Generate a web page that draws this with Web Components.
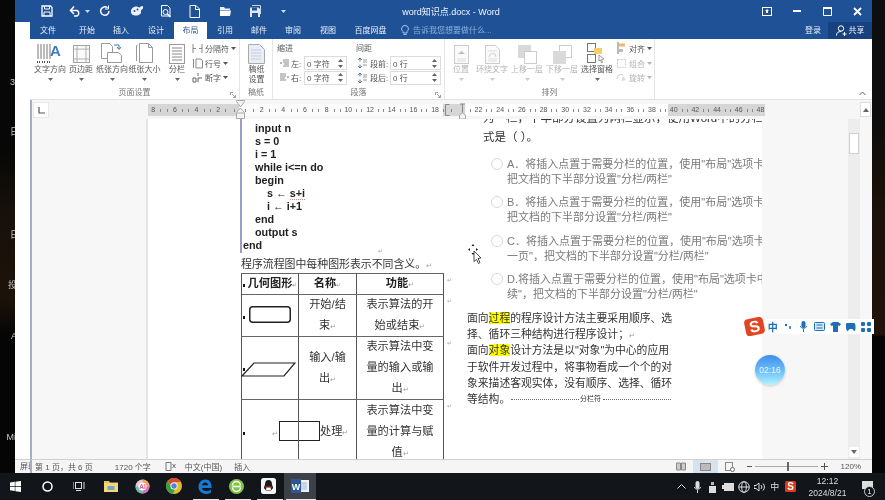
<!DOCTYPE html>
<html lang="zh">
<head>
<meta charset="utf-8">
<title>word知识点.docx - Word</title>
<style>
  html, body { margin: 0; background: #060606; }
  body {
    width: 885px; height: 500px; overflow: hidden; position: relative;
    font-family: "Liberation Sans", "Noto Sans CJK SC", sans-serif;
    filter: blur(.35px);
  }
  .top { display: flex; height: 473px; }
</style>
</head>
<body>
<div class="top">
  <desk-strip></desk-strip>
  <back-strip></back-strip>
  <word-window>
    <title-bar></title-bar>
    <ribbon-tabs></ribbon-tabs>
    <word-ribbon></word-ribbon>
    <word-ruler></word-ruler>
    <doc-view></doc-view>
    <status-bar></status-bar>
  </word-window>
  <desk-edge></desk-edge>
</div>
<task-bar></task-bar>
<float-layer></float-layer>

<script>
const ICONS = {
  textdir: `<svg width="28" height="21" viewBox="0 0 28 21"><g stroke="#777" fill="none"><path d="M2 1v15M5 1v15M8 1v15M11 1v15M14 1v15"/><path d="M1 19h3M6 19h3M11 19h3" stroke="#555" stroke-width="2" stroke-dasharray="1 1"/></g><text x="14" y="13" font-size="15" font-weight="bold" fill="#3d7cc0" font-family="Liberation Sans">A</text></svg>`,
  margins: `<svg width="17" height="19" viewBox="0 0 19 21"><g stroke="#999" fill="#fafafa"><rect x=".5" y=".5" width="18" height="19"/></g><path d="M4.500 1v18M14.500 1v18M1 4.500h17M1 15.500h17" stroke="#aaa" fill="none"/></svg>`,
  orient: `<svg width="24" height="22" viewBox="0 0 24 22"><g stroke="#999" fill="#fff"><path d="M1.500 1.500h8l3 3v12h-11z"/><path d="M7.500 10.500h11l3 3v7h-14z"/></g><path d="M14 3h5v4M17 5l2 2.500 2-2.500" stroke="#3d7cc0" fill="none"/></svg>`,
  size: `<svg width="20" height="22" viewBox="0 0 20 22"><path d="M1.500 19V3.500h1M4.500 1.500h9l4 4v15h-13z" stroke="#999" fill="#fff"/><path d="M13.500 1.500v4h4" stroke="#999" fill="none"/></svg>`,
  cols: `<svg width="16" height="20" viewBox="0 0 16 20"><rect x=".5" y=".5" width="15" height="19" fill="#fff" stroke="#999"/><path d="M3 4h10M3 7h10M3 10h10M3 13h10M3 16h10" stroke="#888"/></svg>`,
  manuscript: `<svg width="17" height="20" viewBox="0 0 17 20"><path d="M.5.5h11l5 5v14H.5z" fill="#e9eef6" stroke="#aaa"/><path d="M3 6h10M3 9h10M3 12h10M3 15h10" stroke="#c4cee0"/></svg>`,
  breaks: `<svg width="11" height="11" viewBox="0 0 11 11"><path d="M1 1v9M10 1v9M1 5.500h3M7 5.500h3" stroke="#888" fill="none"/></svg>`,
  lines: `<svg width="11" height="11" viewBox="0 0 11 11"><path d="M1.500 1v9M4 1h5l1.500 2v7H4z" stroke="#888" fill="#fff"/></svg>`,
  hyphen: `<svg width="11" height="11" viewBox="0 0 11 11"><path d="M1 10V6h3v4zM6 10V6h4" stroke="#666" fill="none"/><path d="M6 1v3" stroke="#3d7cc0"/></svg>`,
  indentL: `<svg width="9" height="9" viewBox="0 0 9 9"><path d="M3 1h6M3 3h6M4 5h5M3 7h6" stroke="#8a8a8a"/><path d="M0 4h2" stroke="#3d7cc0"/></svg>`,
  indentR: `<svg width="9" height="9" viewBox="0 0 9 9"><path d="M0 1h6M0 3h6M0 5h5M0 7h6" stroke="#8a8a8a"/><path d="M7 4h2" stroke="#3d7cc0"/></svg>`,
  spaceB: `<svg width="9" height="10" viewBox="0 0 9 10"><path d="M2 0v3.500M2 6.500v3.500" stroke="#3d7cc0"/><path d="M0 2l2-2 2 2M0 8l2 2 2-2" fill="none" stroke="#555" stroke-width=".7"/><path d="M5 2h4M5 4h4M5 7h4" stroke="#999"/></svg>`,
  position: `<svg width="15" height="19" viewBox="0 0 15 19"><rect x=".5" y=".5" width="14" height="18" fill="#fafafa" stroke="#ccc"/><path d="M3 14h9M3 16h9" stroke="#ddd"/><path d="M4 9l3.500-3 3.500 3z" fill="#bbb"/></svg>`,
  wrap: `<svg width="15" height="19" viewBox="0 0 15 19"><path d="M.5.500h10l4 4v14H.5z" fill="#fafafa" stroke="#ccc"/><path d="M3 6h9M3 14h9M3 16h9" stroke="#ddd"/><path d="M4 12a3.500 3.500 0 0 1 7 0" stroke="#ccc" fill="none"/></svg>`,
  fwd: `<svg width="19" height="19" viewBox="0 0 19 19"><rect x=".5" y=".5" width="12" height="12" fill="#d9d9d9" stroke="#d9d9d9"/><rect x="6.500" y="6.500" width="12" height="12" fill="#fff" stroke="#ccc"/></svg>`,
  back: `<svg width="19" height="19" viewBox="0 0 19 19"><rect x="6.500" y=".5" width="12" height="12" fill="#fff" stroke="#ccc"/><rect x=".5" y="6.500" width="12" height="12" fill="#d9d9d9" stroke="#d9d9d9"/></svg>`,
  pane: `<svg width="20" height="21" viewBox="0 0 20 21"><rect x=".5" y=".5" width="8" height="8" fill="#fff" stroke="#777"/><rect x=".5" y="11.500" width="8" height="8" fill="#fff" stroke="#777"/><rect x="7" y="5" width="8" height="6" fill="#f3cf6d"/><path d="M12 12l5 4-2.500.5 1 3-1 .5-1-3-1.500 1z" fill="#fff" stroke="#777" stroke-width=".7"/></svg>`,
  align: `<svg width="11" height="12" viewBox="0 0 11 12"><path d="M2 0v12" stroke="#777"/><rect x="3" y="1.500" width="6" height="3" fill="#e9b96a"/><rect x="3" y="7" width="4" height="3" fill="#bbb"/></svg>`,
  group: `<svg width="11" height="11" viewBox="0 0 11 11"><rect x="1.500" y="1.500" width="8" height="8" fill="none" stroke="#ccc" stroke-dasharray="2 1"/></svg>`,
  rotate: `<svg width="11" height="11" viewBox="0 0 11 11"><path d="M1 7a4 4 0 0 1 6-4" stroke="#ccc" fill="none"/><path d="M5 9l5-1-3-4z" fill="#ddd"/></svg>`
};

const CARET = `<svg width="5" height="3" viewBox="0 0 5 3"><path d="M0 0h5L2.500 3z" fill="currentColor"/></svg>`;
const MARK = `<span style="color:#999;font-size:7px">↵</span>`;

class DeskStrip extends HTMLElement {
  constructor() {
    super();
    this.attachShadow({ mode: 'open' }).innerHTML = `
      <style>
        :host { display: flex; flex-direction: column; align-items: flex-end; width: 15px; overflow: hidden;
          background: linear-gradient(#070707 0 150px, #17100a 210px, #1c1208 300px, #050505 335px);
          color: #c8c8c8; font-size: 9px; line-height: 12px; }
        span { white-space: nowrap; display: block; }
      </style>
      <span style="margin-top:76px">3</span>
      <span style="margin-top:38px;margin-right:-4px">日</span>
      <span style="margin-top:91px;margin-right:-4px">日</span>
      <span style="margin-top:38px;margin-right:-2px">投</span>
      <span style="margin-top:39px;margin-right:-2px">A</span>
      <span style="margin-top:89px;margin-right:-1px">Mi</span>`;
  }
}
customElements.define('desk-strip', DeskStrip);

class BackStrip extends HTMLElement {
  constructor() {
    super();
    this.attachShadow({ mode: 'open' }).innerHTML = `
      <style>
        :host { display: flex; flex-direction: column; width: 15px; overflow: hidden; background: #fff; }
        .blue { height: 22px; background: #1f5197; }
        .fill { flex: 1; }
        .foot { height: 14px; box-sizing: border-box; border-top: 1px solid #d0d0d0; background: #f5f5f5; font-size: 8px; line-height: 13px;
          color: #555; padding-left: 5px; white-space: nowrap; }
      </style>
      <div class="blue"></div><div class="fill"></div><div class="foot">屏幕</div>`;
  }
}
customElements.define('back-strip', BackStrip);

class DeskEdge extends HTMLElement {
  constructor() {
    super();
    this.attachShadow({ mode: 'open' }).innerHTML = `
      <style>:host { display: block; width: 13px; background: linear-gradient(#0e0e0e 0 120px, #1a1108 200px, #21120a 335px, #050505 336px); }</style>`;
  }
}
customElements.define('desk-edge', DeskEdge);

class WordWindow extends HTMLElement {
  constructor() {
    super();
    this.attachShadow({ mode: 'open' }).innerHTML = `
      <style>:host { display: flex; flex-direction: column; width: 842px; height: 473px; background: #fff; overflow: hidden; }</style>
      <slot></slot>`;
  }
}
customElements.define('word-window', WordWindow);

class TitleBar extends HTMLElement {
  constructor() {
    super();
    this.attachShadow({ mode: 'open' }).innerHTML = `
      <style>
        :host { display: grid; grid-template-columns: 1fr auto 1fr; height: 22px; background: #1f5197; color: #fff; align-items: center; }
        .quick { display: flex; align-items: center; }
        .quick svg { display: block; flex: none; }
        .title { font-size: 9px; white-space: nowrap; color: #f2f5fa; }
        .win { display: flex; justify-content: flex-end; }
        .win span { width: 30px; height: 22px; display: flex; align-items: center; justify-content: center; }
      </style>
      <div class="quick">
        <svg style="margin-left:11px" width="12" height="12" viewBox="0 0 12 12"><path d="M1 1h8.500L11 2.500V11H1z" fill="none" stroke="#fff" stroke-width="1.300"/><path d="M3.500 1v3h5V1M3 11V7h6v4" fill="none" stroke="#fff"/></svg>
        <svg style="margin-left:16px" width="12" height="12" viewBox="0 0 12 12"><path d="M2 5.500h6a3 3 0 0 1 0 5.500H5" fill="none" stroke="#fff" stroke-width="1.500"/><path d="M5 1.500L1.500 5.500 5 9" fill="none" stroke="#fff" stroke-width="1.500"/></svg>
        <svg style="margin-left:4px;color:#cfdcee" width="5" height="3" viewBox="0 0 5 3"><path d="M0 0h5L2.500 3z" fill="currentColor"/></svg>
        <svg style="margin-left:9px" width="12" height="12" viewBox="0 0 12 12"><path d="M10 6a4.200 4.200 0 1 1-1.500-3.200" fill="none" stroke="#fff" stroke-width="1.500"/><path d="M9.500.5v3.500H6" fill="none" stroke="#fff"/></svg>
        <svg style="margin-left:19px" width="14" height="12" viewBox="0 0 14 12"><path d="M1 6.500C1 3 4 1.500 6.500 1.500c1.500 0 2 1 3 1s1-1.500 2.500-1.500 1.500 2 .5 3-2 1.500-1.500 3-2 3.500-5 3.500S1 9.500 1 6.500z" fill="#eef2f8"/><circle cx="4.500" cy="6" r="1" fill="#1f5197"/><circle cx="7.500" cy="4.500" r="1" fill="#1f5197"/></svg>
        <svg style="margin-left:16px" width="12" height="13" viewBox="0 0 12 13"><path d="M1.500.5h6l2.500 2.500v8h-8.500z" fill="none" stroke="#fff"/><circle cx="5.500" cy="7" r="2.500" fill="none" stroke="#fff"/><path d="M7.500 9l3 3" stroke="#fff" stroke-width="1.500"/></svg>
        <svg style="margin-left:17px" width="11" height="13" viewBox="0 0 11 13"><path d="M1 .5h6L10.500 4v8.500H1z" fill="#1f5197" stroke="#fff"/><path d="M6.500.5v4h4" fill="none" stroke="#fff"/></svg>
        <svg style="margin-left:19px" width="13" height="12" viewBox="0 0 13 12"><path d="M1 2h4l1 1.500h5V5H1z" fill="#eef2f8"/><path d="M1 5.500h11l-1 5.500H1z" fill="#fff"/></svg>
        <svg style="margin-left:17px" width="13" height="13" viewBox="0 0 13 13"><path d="M3 .5h8.500V9" fill="none" stroke="#c8d4e8"/><path d="M1 2.500h8.500L11 4v8H1z" fill="#dfe6f1"/><rect x="3" y="2.500" width="5" height="3" fill="#1f5197"/><rect x="3" y="8" width="6" height="4" fill="#1f5197"/></svg>
        <svg style="margin-left:19px;color:#cfdcee" width="5" height="3" viewBox="0 0 5 3"><path d="M0 0h5L2.500 3z" fill="currentColor"/></svg>
      </div>
      <div class="title">word知识点.docx - Word</div>
      <div class="win">
        <span><svg width="10" height="9" viewBox="0 0 10 9"><rect x=".5" y=".5" width="9" height="8" fill="none" stroke="#fff"/><path d="M3 4h4L5 2zM4 4h2v2H4z" fill="#fff"/></svg></span>
        <span><svg width="8" height="2"><rect width="8" height="2" fill="#fff"/></svg></span>
        <span><svg width="9" height="9" viewBox="0 0 9 9"><path d="M.5 1.500h8v7h-8z" fill="none" stroke="#fff"/><path d="M0 1h9" stroke="#fff" stroke-width="2"/></svg></span>
        <span><svg width="9" height="9" viewBox="0 0 9 9"><path d="M1 1l7 7M8 1L1 8" stroke="#fff" stroke-width="1.800"/></svg></span>
      </div>`;
  }
}
customElements.define('title-bar', TitleBar);

class RibbonTabs extends HTMLElement {
  constructor() {
    super();
    const tabs = [['文件', 34, 1], ['开始', 34, 5], ['插入', 34, 0], ['设计', 34, 1], ['布局', 33, 1], ['引用', 34, 1], ['邮件', 34, 0], ['审阅', 34, 0], ['视图', 34, 1], ['百度网盘', 33, 9]];
    this.attachShadow({ mode: 'open' }).innerHTML = `
      <style>
        :host { display: flex; height: 17px; background: #1f5197; color: #e8eef7; font-size: 8px; line-height: 17px; white-space: nowrap; }
        .tab { text-align: center; }
        .tab.on { background: #fff; color: #2b5797; }
        .tell { display: flex; align-items: center; gap: 4px; margin-left: 14px; color: #8fb0dc; }
        .spacer { flex: 1; }
        .login { margin-right: 7px; }
        .share { width: 44px; background: #17417f; display: flex; align-items: center; justify-content: center; gap: 2px; }
        svg { display: block; }
      </style>
      ${tabs.map(t => `<div class="tab${t[0] === '布局' ? ' on' : ''}" style="width:${t[1]}px;margin-left:${t[2]}px">${t[0]}</div>`).join('')}
      <div class="tell">
        <svg width="8" height="11" viewBox="0 0 8 11"><path d="M4 .5a3.300 3.300 0 0 1 2 6v1.500H2V6.500a3.300 3.300 0 0 1 2-6zM2.500 9.500h3" fill="none" stroke="#a9c4e8"/></svg>
        <span>告诉我您想要做什么...</span>
      </div>
      <div class="spacer"></div>
      <div class="login">登录</div>
      <div class="share">
        <svg width="11" height="11" viewBox="0 0 11 11"><circle cx="5" cy="3.500" r="2.700" fill="none" stroke="#fff"/><path d="M.5 10.500c0-3 2-4 4.500-4M8.500 7v4M6.500 9h4" fill="none" stroke="#fff"/></svg>
        <span>共享</span>
      </div>`;
  }
}
customElements.define('ribbon-tabs', RibbonTabs);

// big ribbon button: icon, label, optional caret
class RbLarge extends HTMLElement {
  connectedCallback() {
    const off = this.hasAttribute('off');
    this.attachShadow({ mode: 'open' }).innerHTML = `
      <style>
        :host { display: flex; flex-direction: column; align-items: center; width: ${this.getAttribute('w')}px; flex: none;
          color: ${off ? '#b4b4b4' : '#555'}; font-size: 8px; line-height: 10px; white-space: nowrap; }
        .icon { height: 22px; margin-top: 3px; display: flex; align-items: flex-end; justify-content: center; margin-bottom: 1px; }
        svg { display: block; }
        .caret { margin-top: 3px; display: flex; justify-content: center; color: ${off ? '#ccc' : '#666'}; }
      </style>
      <div class="icon">${ICONS[this.getAttribute('icon')]}</div>
      <div>${this.getAttribute('label')}</div>
      <div class="caret">${CARET}</div>`;
  }
}
customElements.define('rb-large', RbLarge);

class RbSmall extends HTMLElement {
  connectedCallback() {
    const off = this.hasAttribute('off');
    this.attachShadow({ mode: 'open' }).innerHTML = `
      <style>
        :host { display: flex; align-items: center; gap: 2px; height: 15px; color: ${off ? '#b4b4b4' : '#555'}; font-size: 8px; white-space: nowrap; }
        svg { display: block; }
        .i { width: 11px; display: flex; justify-content: center; }
      </style>
      <span class="i">${ICONS[this.getAttribute('icon')]}</span>
      <span>${this.getAttribute('label')}</span>${CARET}`;
  }
}
customElements.define('rb-small', RbSmall);

class RbGroup extends HTMLElement {
  connectedCallback() {
    const launcher = this.hasAttribute('launcher');
    this.attachShadow({ mode: 'open' }).innerHTML = `
      <style>
        :host { display: flex; flex-direction: column; width: ${this.getAttribute('w')}px; flex: none; box-sizing: border-box;
          height: 60px; border-right: 1px solid #e6e6e6; position: relative; }
        .body { flex: 1; display: flex; padding-left: ${this.getAttribute('pad') || 0}px; min-height: 0; }
        .name { height: 14px; line-height: 14px; font-size: 8px; color: #777; text-align: center; white-space: nowrap; position: relative; top: 1px; }
        .launch { position: absolute; right: 3px; bottom: 1px; }
      </style>
      <div class="body"><slot></slot></div>
      <div class="name">${this.getAttribute('label')}</div>
      ${launcher ? `<svg class="launch" width="6" height="6" viewBox="0 0 6 6"><path d="M.5 3V.5H3M2 2l3.500 3.500M5.500 3v2.500H3" fill="none" stroke="#888" stroke-width=".8"/></svg>` : ''}`;
  }
}
customElements.define('rb-group', RbGroup);

class SpinField extends HTMLElement {
  connectedCallback() {
    this.attachShadow({ mode: 'open' }).innerHTML = `
      <style>
        :host { display: flex; align-items: center; justify-content: space-between; box-sizing: border-box; height: 14px; flex: none;
          border: 1px solid #dcdcdc; padding: 0 3px 0 2px; font-size: 8px; color: #555; white-space: nowrap; width: ${this.getAttribute('w')}px; }
        svg { display: block; }
      </style>
      <span>${this.textContent}</span>
      <svg width="5" height="9" viewBox="0 0 5 9"><path d="M0 3l2.500-3L5 3zM0 6l2.500 3L5 6z" fill="#666"/></svg>`;
  }
}
customElements.define('spin-field', SpinField);

class WordRibbon extends HTMLElement {
  constructor() {
    super();
    this.attachShadow({ mode: 'open' }).innerHTML = `
      <style>
        :host { display: flex; height: 61px; background: #fff; border-bottom: 1px solid #e2e2e2; box-sizing: border-box; }
        .col { display: flex; flex-direction: column; margin-left: -1px; padding-top: 2px; }
        .para { display: flex; flex-direction: column; font-size: 8px; color: #555; padding-top: 2px; white-space: nowrap; }
        .heads { display: flex; height: 15px; line-height: 15px; padding-left: 4px; }
        .heads span:first-child { width: 79px; }
        .row { display: flex; height: 15px; align-items: center; padding-left: 7px; }
        .row svg { display: block; flex: none; }
        .row .l1 { width: 13px; margin-left: 2px; flex: none; }
        .row .l2 { width: 20px; margin-left: 3px; flex: none; }
        .row .g { margin-left: 11px; flex: none; }
        .spacer { flex: 1; display: flex; justify-content: flex-end; align-items: flex-end; padding: 0 6px 3px 0; }
      </style>
      <rb-group label="页面设置" w="210" pad="4" launcher>
        <rb-large w="32" icon="textdir" label="文字方向"></rb-large>
        <rb-large w="30" icon="margins" label="页边距"></rb-large>
        <rb-large w="32" icon="orient" label="纸张方向"></rb-large>
        <rb-large w="33" icon="size" label="纸张大小"></rb-large>
        <rb-large w="32" icon="cols" label="分栏"></rb-large>
        <div class="col">
          <rb-small icon="breaks" label="分隔符"></rb-small>
          <rb-small icon="lines" label="行号"></rb-small>
          <rb-small icon="hyphen" label="断字"></rb-small>
        </div>
      </rb-group>
      <rb-group label="稿纸" w="33" pad="1">
        <stack-btn></stack-btn>
      </rb-group>
      <rb-group label="段落" w="172" launcher>
        <div class="para">
          <div class="heads"><span>缩进</span><span>间距</span></div>
          <div class="row">${ICONS.indentL}<span class="l1">左:</span><spin-field w="43">0 字符</spin-field><span class="g">${ICONS.spaceB}</span><span class="l2">段前:</span><spin-field w="51">0 行</spin-field></div>
          <div class="row">${ICONS.indentR}<span class="l1">右:</span><spin-field w="43">0 字符</spin-field><span class="g">${ICONS.spaceB}</span><span class="l2">段后:</span><spin-field w="51">0 行</spin-field></div>
        </div>
      </rb-group>
      <rb-group label="排列" w="210" pad="3">
        <rb-large off w="26" icon="position" label="位置"></rb-large>
        <rb-large off w="36" icon="wrap" label="环绕文字"></rb-large>
        <rb-large off w="34" icon="fwd" label="上移一层"></rb-large>
        <rb-large off w="36" icon="back" label="下移一层"></rb-large>
        <rb-large w="34" icon="pane" label="选择窗格"></rb-large>
        <div class="col" style="margin-left:2px">
          <rb-small icon="align" label="对齐"></rb-small>
          <rb-small off icon="group" label="组合"></rb-small>
          <rb-small off icon="rotate" label="旋转"></rb-small>
        </div>
      </rb-group>
      <div class="spacer"><svg width="7" height="5" viewBox="0 0 7 5"><path d="M.5 4l3-3 3 3" fill="none" stroke="#666"/></svg></div>`;
  }
}

class StackBtn extends HTMLElement {
  constructor() {
    super();
    this.attachShadow({ mode: 'open' }).innerHTML = `
      <style>
        :host { display: flex; flex-direction: column; align-items: center; width: 32px; font-size: 8px; line-height: 10px; color: #555; padding-top: 5px; }
        .icon { height: 20px; display: flex; align-items: flex-end; margin-bottom: 1px; }
        svg { display: block; }
      </style>
      <div class="icon">${ICONS.manuscript}</div>
      <div>稿纸</div><div>设置</div>`;
  }
}
customElements.define('stack-btn', StackBtn);
customElements.define('word-ribbon', WordRibbon);

class WordRuler extends HTMLElement {
  constructor() {
    super();
    const nums = [8, 6, 4, 2, '', 2, 4, 6, 8, 10, 12, 14, 16, 18, '', 22, 24, 26, 28, 30, 32, 34, 36, 38, 40, 42, 44, 46, 48];
    this.attachShadow({ mode: 'open' }).innerHTML = `
      <style>
        :host { display: flex; height: 19px; background: #f6f6f6; box-sizing: border-box; border-left: 2px solid #a6aec2; position: relative; }
        .corner { width: 16px; height: 16px; margin: 2px 0 0 1px; background: #fff; border: 1px solid #e8e8e8; box-sizing: border-box; display: flex; align-items: center; justify-content: center; }
        .track { width: 617px; height: 12px; margin: 4px 0 0 99px; overflow: hidden; display: flex;
          background: linear-gradient(to right, #d6d6d6 0 91px, #fbfbfb 91px 295px, #d6d6d6 295px 317px, #fff 317px 520px, #d6d6d6 520px); }
        .inner { display: flex; margin-left: -5.65px; flex: none; }
        .n { width: 21.7px; flex: none; display: flex; align-items: center; justify-content: space-around; font-size: 7px; color: #555; line-height: 12px; }
        .n::before, .n::after { content: ""; width: 1px; height: 3px; background: #888; }
        .mark { position: absolute; top: 0; }
        .sb { margin: 2px 0 0 95px; width: 11px; height: 15px; background: #fff; border: 1px solid #ddd; box-sizing: border-box; display: flex; align-items: center; justify-content: center; }
      </style>
      <div class="corner"><svg width="7" height="7" viewBox="0 0 7 7"><path d="M1 0v6h6" fill="none" stroke="#555" stroke-width="1.200"/></svg></div>
      <div class="track"><div class="inner">${nums.map(n => `<div class="n">${n}</div>`).join('')}</div></div>
      <div class="sb"><svg width="6" height="4" viewBox="0 0 6 4"><path d="M0 4l3-4 3 4z" fill="#666"/></svg></div>
      <svg class="mark" style="left:204px" width="9" height="19" viewBox="0 0 9 19"><path d="M.5.500h8v1L4.500 7 .5 1.500zM4.500 8l4 4.500v6h-8v-6z" fill="#f4f4f4" stroke="#aaa"/><path d="M.5 13h8" stroke="#aaa"/></svg>
      <svg class="mark" style="left:413px;top:4px" width="5" height="12" viewBox="0 0 5 12"><path d="M4.500.5H.5v11h4" fill="none" stroke="#888"/></svg>
      <svg class="mark" style="left:427px;top:3px" width="7" height="16" viewBox="0 0 7 16"><path d="M1 1h5M3.500 1v9" fill="none" stroke="#888"/><path d="M.5 16v-4l3-2 3 2v4z" fill="#f4f4f4" stroke="#aaa"/></svg>`;
  }
}
customElements.define('word-ruler', WordRuler);

class FlowTable extends HTMLElement {
  constructor() {
    super();
    this.attachShadow({ mode: 'open' }).innerHTML = `
      <style>
        :host { display: grid; grid-template-columns: 57px 58px 88px 12px; grid-template-rows: 21px 42px 63px 64px;
          font-size: 11.2px; line-height: 21px; color: #333; box-sizing: border-box; position: relative; }
        .c { border-left: 1px solid #555; border-top: 1px solid #666; box-sizing: border-box; display: flex; flex-direction: column;
          align-items: center; justify-content: center; text-align: center; position: relative; white-space: nowrap; }
        .c.last { border-right: 1px solid #555; }
        .h { font-weight: bold; color: #222; }
        .e { font-size: 6px; color: #aaa; line-height: 10px; padding: 2px 0 0 3px; }
        .c::before { content: ""; position: absolute; left: 1px; top: 50%; width: 2px; height: 3px; background: #111; }
        .c.nb::before { display: none; }
        svg { display: block; }
        .proc { position: absolute; left: 37px; top: 21px; width: 41px; height: 20px; box-sizing: border-box; border: 1.500px solid #222; background: #fff; }
      </style>
      <div class="c h" style="padding-left:5px"><span>几何图形<span style="color:#999;font-size:6px;font-weight:normal">↵</span></span></div>
      <div class="c nb h"><span>名称<span style="color:#999;font-size:6px;font-weight:normal">↵</span></span></div>
      <div class="c nb last"><span><b style="color:#222">功能</b>${MARK}</span></div>
      <div class="e">↵</div>

      <div class="c"><svg width="42" height="17" viewBox="0 0 42 17" style="margin-top:-2px"><rect x=".75" y=".75" width="40.500" height="15.500" rx="3" fill="#fff" stroke="#222" stroke-width="1.500"/></svg></div>
      <div class="c nb"><div>开始/结</div><div>束${MARK}</div></div>
      <div class="c nb last"><div>表示算法的开</div><div>始或结束${MARK}</div></div>
      <div class="e">↵</div>

      <div class="c"><svg width="55" height="15" viewBox="0 0 55 15" style="margin:2px 0 0 -3px"><path d="M1 14L13 1h41L43 14z" fill="#fff" stroke="#222" stroke-width="1.200"/></svg></div>
      <div class="c nb"><div>输入/输</div><div>出${MARK}</div></div>
      <div class="c nb last"><div>表示算法中变</div><div>量的输入或输</div><div>出${MARK}</div></div>
      <div class="e">↵</div>

      <div class="c"><span style="position:relative;left:5px;top:2px;color:#999;font-size:7px">↵</span><div class="proc"></div></div>
      <div class="c nb" style="align-items:flex-start;padding-left:21px"><span>处理${MARK}</span></div>
      <div class="c nb last"><div>表示算法中变</div><div>量的计算与赋</div><div>值${MARK}</div></div>
      <div class="e">↵</div>`;
  }
}
customElements.define('flow-table', FlowTable);

class OptionItem extends HTMLElement {
  connectedCallback() {
    const lines = this.textContent.trim().split('|');
    this.attachShadow({ mode: 'open' }).innerHTML = `
      <style>
        :host { display: flex; padding-left: 24px; margin-bottom: 8.500px; font-size: 11px; line-height: 15px; color: #7a7a7a; white-space: nowrap; }
        .dot { width: 12px; height: 12px; flex: none; border: 1.500px solid #d8d8d8; border-radius: 50%; box-sizing: border-box; margin: 1px 4px 0 0; }
      </style>
      <div class="dot"></div>
      <div><div>${lines[0]}</div><div>${lines[1]}</div></div>`;
  }
}
customElements.define('option-item', OptionItem);

class DocView extends HTMLElement {
  constructor() {
    super();
    this.attachShadow({ mode: 'open' }).innerHTML = `
      <style>
        :host { display: flex; height: 340px; overflow: hidden; background: #f7f7f7; box-sizing: border-box; border-left: 2px solid #a6aec2; position: relative; }
        .gutter { width: 116px; flex: none; border-right: 2px solid #e4e4e4; box-sizing: border-box; }
        .page { width: 614px; flex: none; background: #fff; display: flex; padding-left: 93px; box-sizing: border-box; overflow: hidden; }
        .c1 { width: 204px; flex: none; }
        .c2 { width: 295px; flex: none; margin-left: 22px; overflow: hidden; }
        .code { border-left: 2px solid #9c9cc8; padding: 3px 0 1px 1px; font-weight: bold; font-size: 10.800px; line-height: 13px; color: #222; white-space: nowrap; height: 130px; position: relative; margin-left: -1px; }
        .code .i1 { padding-left: 12px; }
        .code .i2 { padding-left: 24px; }
        .code .m { position: absolute; left: 136px; top: 126px; color: #aaa; font-size: 6px; font-weight: normal; }
        .cap { font-size: 10.900px; line-height: 16px; margin-top: 3px; height: 17px; white-space: nowrap; color: #333; }
        .wave { border-bottom: 1px dotted #d08a8a; }
        .inner { margin-top: -10px; }
        .q { padding-left: 16px; font-size: 11.500px; line-height: 18px; color: #333; white-space: nowrap; }
        .opts { margin-top: 10.500px; }
        .p { width: 204px; font-size: 10.800px; line-height: 16.200px; color: #333; white-space: nowrap; margin-top: -.5px; }
        .p > div { height: 16.200px; }
        mark { background: #ffff00; color: #333; padding: 0; }
        .brk { display: flex; align-items: center; }
        .brk i { height: 0; border-top: 1px dotted #666; flex: 1; margin-left: 1px; }
        .brk span.t { font-size: 7px; padding: 0 1px; }
        .side { width: 98px; flex: none; display: flex; justify-content: flex-end; }
        .bar { width: 12px; background: #ededed; display: flex; flex-direction: column; align-items: center; }
        .thumb { width: 10px; height: 21px; margin-top: 14px; background: #fff; border: 1px solid #d0d0d0; box-sizing: border-box; }
        .fill { flex: 1; }
        .dn { height: 10px; width: 10px; background: #fff; display: flex; align-items: center; justify-content: center; margin-bottom: 2px; }
        .handle { position: absolute; left: -4px; top: 106px; width: 8px; height: 22px; border: 1px solid #bbb; border-radius: 50%; box-sizing: border-box; clip-path: inset(0 50% 0 0); }
      </style>
      <div class="gutter"></div>
      <div class="page">
        <div class="c1">
          <div class="code">
            <div class="i1">input n</div>
            <div class="i1">s = 0</div>
            <div class="i1">i = 1</div>
            <div class="i1">while i&lt;=n do</div>
            <div class="i1">begin</div>
            <div class="i2">s ← <span class="wave">s+i</span></div>
            <div class="i2">i ← i+1</div>
            <div class="i1">end</div>
            <div class="i1">output s</div>
            <div>end</div>
            <span class="m">↵</span>
          </div>
          <div class="cap">程序流程图中每种图形表示不同含义。${MARK}</div>
          <flow-table></flow-table>
        </div>
        <div class="c2"><div class="inner">
          <div class="q">为一栏，下半部分设置为两栏显示，使用Word中的分栏制方</div>
          <div class="q" style="margin-top:1px">式是（ ）。</div>
          <div class="opts">
            <option-item>A．将插入点置于需要分栏的位置，使用"布局"选项卡中|把文档的下半部分设置"分栏/两栏"</option-item>
            <option-item>B．将插入点置于需要分栏的位置，使用"布局"选项卡中|把文档的下半部分设置"分栏/两栏"</option-item>
            <option-item>C．将插入点置于需要分栏的位置，使用"布局"选项卡中|一页"，把文档的下半部分设置"分栏/两栏"</option-item>
            <option-item>D.将插入点置于需要分栏的位置，使用"布局"选项卡中|续"，把文档的下半部分设置"分栏/两栏"</option-item>
          </div>
          <div class="p">
            <div>面向<mark>过程</mark>的程序设计方法主要采用顺序、选</div>
            <div>择、循环三种结构进行程序设计；${MARK}</div>
            <div>面向<mark>对象</mark>设计方法是以"对象"为中心的应用</div>
            <div>于软件开发过程中，将事物看成一个个的对</div>
            <div>象来描述客观实体，没有顺序、选择、循环</div>
            <div class="brk"><span>等结构。</span><i></i><span class="t">分栏符</span><i></i></div>
          </div>
        </div></div>
      </div>
      <div class="side"><div class="bar">
        <div class="thumb"></div><div class="fill"></div>
        <div class="dn"><svg width="6" height="4" viewBox="0 0 6 4"><path d="M0 0l3 4 3-4z" fill="#666"/></svg></div>
      </div></div>
      <div class="handle"></div>`;
  }
}
customElements.define('doc-view', DocView);

class StatusBar extends HTMLElement {
  constructor() {
    super();
    this.attachShadow({ mode: 'open' }).innerHTML = `
      <style>
        :host { display: flex; align-items: center; height: 14px; box-sizing: border-box; border-top: 1px solid #d0d0d0; border-left: 2px solid #a6aec2;
          background: #f5f5f5; font-size: 8px; color: #555; white-space: nowrap; }
        span { flex: none; }
        svg { display: block; flex: none; }
        .spacer { flex: 1; }
        .view { display: flex; align-items: center; justify-content: center; height: 13px; }
        .slider { width: 63px; height: 1px; background: #aaa; position: relative; margin: 0 3px; }
        .slider::after { content: ""; position: absolute; left: 32px; top: -4px; width: 2px; height: 9px; background: #666; }
      </style>
      <span style="margin-left:3px">第 1 页，共 6 页</span>
      <span style="margin-left:22px">1720 个字</span>
      <svg style="margin-left:14px" width="11" height="9" viewBox="0 0 11 9"><path d="M1 .5h5v8H1zM7.500 2l3 4M10.500 2l-3 4" fill="none" stroke="#777"/></svg>
      <span style="margin-left:9px">中文(中国)</span>
      <span style="margin-left:12px">插入</span>
      <div class="spacer"></div>
      <div class="view" style="width:24px"><svg width="10" height="9" viewBox="0 0 10 9"><path d="M.5 1h4v7h-4zM5.500 1h4v7h-4z" fill="#ccc" stroke="#888"/></svg></div>
      <div class="view" style="width:25px;background:#d6e3ef"><svg width="11" height="8" viewBox="0 0 11 8"><rect x=".5" y=".5" width="10" height="7" fill="#bbb" stroke="#888"/></svg></div>
      <div class="view" style="width:25px"><svg width="10" height="10" viewBox="0 0 10 10"><rect x=".5" y=".5" width="7" height="8" fill="none" stroke="#888"/><circle cx="7.500" cy="7.500" r="2" fill="#fff" stroke="#666"/></svg></div>
      <svg style="margin-left:4px" width="5" height="1"><rect width="5" height="1" fill="#555"/></svg>
      <div class="slider"></div>
      <svg width="7" height="7" viewBox="0 0 7 7"><path d="M0 3.500h7M3.500 0v7" stroke="#555"/></svg>
      <span style="margin:0 11px 0 13px">120%</span>`;
  }
}
customElements.define('status-bar', StatusBar);

class TaskBar extends HTMLElement {
  constructor() {
    super();
    this.attachShadow({ mode: 'open' }).innerHTML = `
      <style>
        :host { display: flex; height: 27px; background: #121519; color: #e4e4e4; position: relative; overflow: hidden; }
        .c { width: 31.600px; height: 27px; flex: none; display: flex; align-items: center; justify-content: center; padding-bottom: 1px; box-sizing: border-box; }
        .c.on { background: #3d4046; }
        .spacer { flex: 1; }
        .t { width: 15.500px; height: 27px; flex: none; display: flex; align-items: center; justify-content: center; font-size: 9px; color: #ddd; }
        .clock { width: 45px; margin-left: 7px; text-align: center; font-size: 8.500px; line-height: 12px; color: #ddd; align-self: center; flex: none; white-space: nowrap; }
        .note { width: 35px; flex: none; display: flex; align-items: center; justify-content: center; position: relative; }
        svg { display: block; }
        .peek { position: absolute; bottom: 0; height: 1px; background: #e8e8e8; }
        .badge { position: absolute; left: 14px; top: 13px; width: 9px; height: 9px; border-radius: 50%; border: 1px solid #ccc; background: #121519; font-size: 7px; line-height: 9px; text-align: center; color: #fff; }
      </style>
      <div class="c"><svg width="11" height="11" viewBox="0 0 11 11"><path d="M0 1.500L4.800.8v4.300H0zM5.400.7L11 0v5.100H5.400zM0 5.700h4.800V10L0 9.300zM5.400 5.700H11V11l-5.600-.8z" fill="#fff"/></svg></div>
      <div class="c"><svg width="11" height="11" viewBox="0 0 11 11"><circle cx="5.500" cy="5.500" r="4.500" fill="none" stroke="#fff" stroke-width="1.500"/></svg></div>
      <div class="c"><svg width="12" height="10" viewBox="0 0 12 10"><rect x="2.500" y="1.500" width="6" height="6" fill="none" stroke="#ddd"/><path d="M0 1v7M11 1v7M3 9.500h5" stroke="#ddd"/></svg></div>
      <div class="c"><svg width="14" height="12" viewBox="0 0 14 12"><path d="M0 1h5l1 1.500h8V12H0z" fill="#e5c05c"/><rect y="3" width="14" height="9" fill="#f3d67a"/><rect x="3.500" y="6" width="7" height="4" fill="#7aa4c4"/></svg></div>
      <div class="c"><svg width="15" height="15" viewBox="0 0 15 15"><circle cx="7.500" cy="7.500" r="7" fill="#e8c8d0"/><path d="M7.500.5a7 7 0 0 1 7 7h-7z" fill="#f2a35a"/><path d="M.5 7.500a7 7 0 0 0 7 7v-7z" fill="#66c2a8"/><path d="M7.500 14.500a7 7 0 0 0 7-7h-7z" fill="#d96dc2"/><circle cx="7.500" cy="7.500" r="4" fill="#fff"/><text x="7.500" y="10" font-size="6.500" font-weight="bold" text-anchor="middle" fill="#e0569a" font-family="Liberation Sans">AI</text></svg></div>
      <div class="c"><svg width="16" height="16" viewBox="0 0 16 16"><circle cx="8" cy="8" r="8" fill="#e2ba2c"/><path d="M8 0a8 8 0 0 1 7 4H8a4 4 0 0 0-3.700 2.500L1.800 3A8 8 0 0 1 8 0z" fill="#d9463a"/><path d="M1.800 3l3 5.200a3.500 3.500 0 0 0 4 3L7 16A8 8 0 0 1 1.800 3z" fill="#3d9d4c"/><circle cx="8" cy="8" r="3.500" fill="#fff"/><circle cx="8" cy="8" r="2.700" fill="#4a86dc"/></svg></div>
      <div class="c"><svg width="14" height="15" viewBox="0 0 14 15"><path d="M.5 8C.5 3.500 3.500.5 7.500.5s6 3 6 7.500v1H4c.3 2 1.800 3 4 3 1.800 0 3.500-.5 5-1.500v3c-1.500 1-3.300 1.500-5.300 1.500C3.500 14.500.5 12 .5 8zM4 6.300h6c0-1.700-1-2.800-2.800-2.800C5.500 3.500 4.300 4.600 4 6.300z" fill="#1479d4"/></svg></div>
      <div class="c"><svg width="15" height="15" viewBox="0 0 15 15"><circle cx="7.500" cy="7.500" r="7.500" fill="#7ec544"/><path d="M3.500 6.500a4 4 0 0 1 8 0M11.500 8.500a4 4 0 0 1-8 0M3.500 7.500h8" fill="none" stroke="#fff" stroke-width="1.400"/></svg></div>
      <div class="c"><svg width="15" height="16" viewBox="0 0 15 16"><rect width="15" height="16" rx="2.500" fill="#f5f5f5"/><path d="M7.500 2c2.500 0 3.500 2 3.500 4.500l1 3c.3 1.500-.5 1.500-1 1 0 1-.5 1.500-1 2H5c-.5-.5-1-1-1-2-.5.5-1.300.5-1-1l1-3C4 4 5 2 7.500 2z" fill="#1a1a1a"/><path d="M5.500 9h4l.5 3H5z" fill="#fff"/><path d="M4.500 8.500h6v1.200h-6z" fill="#d5342c"/></svg></div>
      <div class="c on"><svg width="18" height="14" viewBox="0 0 18 14"><rect x="7" y="1" width="11" height="12" fill="#eef2f8"/><path d="M9 4h7M9 6h7M9 8h7M9 10h7" stroke="#9fb6d8"/><rect y="0" width="10" height="14" fill="#2b5797"/><text x="5" y="10.500" font-size="9" font-weight="bold" text-anchor="middle" fill="#fff" font-family="Liberation Sans">W</text></svg></div>
      <div class="spacer"></div>
      <div class="t"><svg width="9" height="5" viewBox="0 0 9 5"><path d="M.5 4.500l4-4 4 4" fill="none" stroke="#ddd"/></svg></div>
      <div class="t"><svg width="7" height="12" viewBox="0 0 7 12"><rect x="1.500" width="4" height="8" rx="2" fill="#ddd"/><path d="M.5 6c0 3 6 3 6 0M3.500 9v3" stroke="#ddd" fill="none"/></svg></div>
      <div class="t"><svg width="7" height="12" viewBox="0 0 7 12"><rect y="5" width="7" height="7" fill="#ddd"/><rect x="2" y="1" width="3" height="3" fill="#bbb"/></svg></div>
      <div class="t"><svg width="12" height="8" viewBox="0 0 12 8"><rect x="2" width="10" height="8" fill="#ddd"/><rect y="2" width="2" height="4" fill="#ddd"/></svg></div>
      <div class="t"><svg width="12" height="12" viewBox="0 0 12 12"><circle cx="6" cy="6" r="5.300" fill="none" stroke="#ddd"/><ellipse cx="6" cy="6" rx="2.300" ry="5.300" fill="none" stroke="#ddd"/><path d="M1 6h10" stroke="#ddd"/></svg></div>
      <div class="t"><svg width="11" height="10" viewBox="0 0 11 10"><path d="M0 3.500h2L5 1v8L2 6.500H0z" fill="none" stroke="#ddd"/><path d="M7 3a3 3 0 0 1 0 4M9 1.500a5 5 0 0 1 0 7" fill="none" stroke="#ddd"/></svg></div>
      <div class="t">中</div>
      <div class="t"><svg width="11" height="11" viewBox="0 0 11 11"><rect width="11" height="11" rx="1.500" fill="#e0391f"/><text x="5.500" y="9" font-size="10" font-weight="bold" text-anchor="middle" fill="#fff" font-family="Liberation Sans">S</text></svg></div>
      <div class="clock"><div>12:12</div><div>2024/8/21</div></div>
      <div class="note"><svg width="11" height="11" viewBox="0 0 11 11"><path d="M0 0h11v8H5L3 10.500V8H0z" fill="#ddd"/></svg><div class="badge">1</div></div>
      <div class="peek" style="left:193px;width:26px"></div>
      <div class="peek" style="left:225px;width:26px"></div>
      <div class="peek" style="left:257px;width:26px"></div>
      <div class="peek" style="left:286px;width:30px"></div>`;
  }
}
customElements.define('task-bar', TaskBar);

// things floating above the window: input method bar, timer bubble, mouse pointer
class FloatLayer extends HTMLElement {
  constructor() {
    super();
    this.attachShadow({ mode: 'open' }).innerHTML = `
      <style>
        :host { display: block; }
        .ime { position: absolute; left: 745px; top: 318px; display: flex; align-items: center; }
        .logo { width: 19px; height: 17px; background: #e2451f; border-radius: 4px; transform: rotate(-12deg); color: #fff; font: bold 16px/17px "Liberation Sans", sans-serif; text-align: center; flex: none; position: relative; }
        .tools { display: flex; width: 110px; height: 15px; background: #fff; align-items: center; color: #1d6fb8; font-size: 10px; font-weight: bold; padding-left: 1px; box-sizing: border-box; }
        .tools span { width: 15.600px; flex: none; display: flex; justify-content: center; align-items: center; }
        svg { display: block; }
        .bubble { position: absolute; left: 755px; top: 355px; width: 30px; height: 30px; border-radius: 50%;
          background: linear-gradient(#3f8fee, #68bcf8 50%, #b4f2ff); box-shadow: 0 1px 3px rgba(0,0,0,.2);
          color: #eaf6ff; font-size: 8.500px; line-height: 30px; text-align: center; }
        .cursor { position: absolute; left: 468px; top: 244px; }
      </style>
      <div class="ime">
        <div class="logo">S</div>
        <div class="tools">
          <span>中</span>
          <span><svg width="8" height="7" viewBox="0 0 8 7"><circle cx="2" cy="2" r="1.200" fill="#1d6fb8"/><path d="M6 3v3" stroke="#1d6fb8" stroke-width="1.500"/></svg></span>
          <span><svg width="7" height="11" viewBox="0 0 7 11"><rect x="1.500" width="4" height="7" rx="2" fill="#1d6fb8"/><path d="M.5 5c0 3 6 3 6 0M3.500 8v3" fill="none" stroke="#1d6fb8"/></svg></span>
          <span><svg width="11" height="9" viewBox="0 0 11 9"><rect x=".5" y=".5" width="10" height="8" rx="1" fill="#d6e8f6" stroke="#1d6fb8"/><path d="M2.500 3h6M2.500 6h6" stroke="#1d6fb8"/></svg></span>
          <span><svg width="11" height="10" viewBox="0 0 11 10"><path d="M3 0L0 2l1.500 2L3 3.500V10h5V3.500L9.500 4 11 2 8 0z" fill="#1d6fb8"/></svg></span>
          <span><svg width="11" height="9" viewBox="0 0 11 9"><path d="M2 1h7c2 0 2 8 .5 8-1 0-1.500-2-2.500-2H5c-1 0-1.500 2-2.500 2C1 9 0 1 2 1z" fill="#1d6fb8"/></svg></span>
          <span><svg width="10" height="10" viewBox="0 0 10 10"><rect width="4" height="4" rx="1" fill="#1d6fb8"/><rect x="6" width="4" height="4" rx="1" fill="#1d6fb8"/><rect y="6" width="4" height="4" rx="1" fill="#1d6fb8"/><rect x="6" y="6" width="4" height="4" rx="1" fill="#1d6fb8"/></svg></span>
        </div>
      </div>
      <div class="bubble">02:16</div>
      <svg class="cursor" width="14" height="20" viewBox="0 0 14 20"><g fill="#222"><path d="M5 0l1.500 2h-3zM5 11L3.500 9h3zM0 5.500l2-1.500v3zM10 5.500L8 4v3z"/></g><path d="M6 7l7 7-3 .5 2 4-1.500 1-2-4L6 17.500z" fill="#fff" stroke="#222" stroke-width=".8"/></svg>`;
  }
}
customElements.define('float-layer', FloatLayer);
</script>
</body>
</html>
